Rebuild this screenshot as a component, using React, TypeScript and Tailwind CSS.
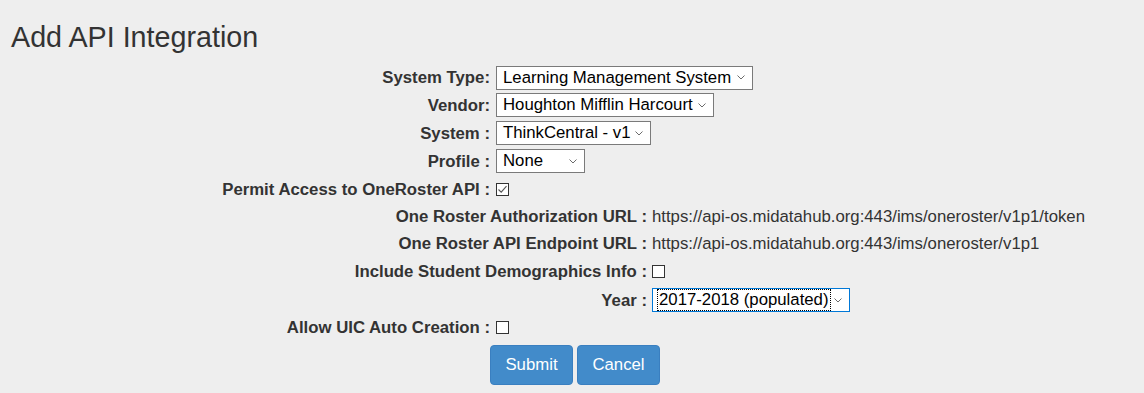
import React from 'react'

const font = { fontFamily: '"Liberation Sans", Arial, sans-serif' }

const Chevron = () => (
  <svg width="8" height="5" viewBox="0 0 8 5" className="shrink-0">
    <path d="M0.5 0.5 L4 4 L7.5 0.5" fill="none" stroke="#6b6b6b" strokeWidth="1" />
  </svg>
)

type SelectProps = { value: string; width: string; focused?: boolean }

const FakeSelect = ({ value, width, focused }: SelectProps) => (
  <div
    className={`flex h-[24px] items-center justify-between bg-white pl-[4px] pr-[7px] text-[16.75px] text-black ${width} ${
      focused ? 'border border-[#0078d7]' : 'border border-[#7a7a7a]'
    }`}
  >
    <span
      className={`whitespace-nowrap leading-[20px] ${
        focused ? 'border border-dotted border-black px-[1px]' : 'px-[2px]'
      }`}
    >
      {value}
    </span>
    <Chevron />
  </div>
)

const Checkbox = ({ checked }: { checked?: boolean }) => (
  <div className="flex h-[13px] w-[13px] items-center justify-center border border-[#333333] bg-white">
    {checked && (
      <svg width="11" height="11" viewBox="0 0 11 11">
        <path d="M1.5 5.5 L4.2 8.2 L9.5 2.2" fill="none" stroke="#555555" strokeWidth="1.1" />
      </svg>
    )}
  </div>
)

const Row = ({
  label,
  children,
  inner,
  height
}: {
  label: string
  children: React.ReactNode
  inner?: boolean
  height: string
}) => (
  <div className={`flex items-center ${height}`}>
    <div
      className={`shrink-0 whitespace-nowrap pt-[1px] text-right text-[16.75px] font-bold text-[#333333] ${
        inner ? 'w-[647px]' : 'w-[490px]'
      }`}
    >
      {label}
    </div>
    <div className={inner ? 'ml-[5px]' : 'ml-[6px]'}>{children}</div>
  </div>
)

export default function App() {
  return (
    <div className="h-[393px] w-[1144px] overflow-hidden bg-[#eeeeee]" style={font}>
      <h1 className="pl-[11px] pt-[22px] text-[28.7px] font-normal leading-[31px] text-[#333333]">
        Add API Integration
      </h1>
      <div className="mt-[11px] flex flex-col">
        <Row label="System Type:" height="h-[27px]">
          <FakeSelect value="Learning Management System" width="w-[257px]" />
        </Row>
        <Row label="Vendor:" height="h-[28px]">
          <FakeSelect value="Houghton Mifflin Harcourt" width="w-[218px]" />
        </Row>
        <Row label="System :" height="h-[28px]">
          <FakeSelect value="ThinkCentral - v1" width="w-[155px]" />
        </Row>
        <Row label="Profile :" height="h-[28px]">
          <FakeSelect value="None" width="w-[89px]" />
        </Row>
        <Row label="Permit Access to OneRoster API :" height="h-[28px]">
          <Checkbox checked />
        </Row>
        <Row label="One Roster Authorization URL :" inner height="h-[26px]">
          <span className="block whitespace-nowrap pt-[1px] text-[16.75px] text-[#333333]">
            https://api-os.midatahub.org:443/ims/oneroster/v1p1/token
          </span>
        </Row>
        <Row label="One Roster API Endpoint URL :" inner height="h-[28px]">
          <span className="block whitespace-nowrap pt-[1px] text-[16.75px] text-[#333333]">
            https://api-os.midatahub.org:443/ims/oneroster/v1p1
          </span>
        </Row>
        <Row label="Include Student Demographics Info :" inner height="h-[28px]">
          <Checkbox />
        </Row>
        <Row label="Year :" inner height="h-[30px]">
          <FakeSelect value="2017-2018 (populated)" width="w-[198px]" focused />
        </Row>
        <Row label="Allow UIC Auto Creation :" height="h-[24px]">
          <Checkbox />
        </Row>
        <div className="ml-[6px] mt-[6px] flex justify-center gap-[4px]">
          <button
            type="button"
            className="h-[40px] w-[83px] rounded-[4px] border border-[#3a7fc0] bg-[#428bca] text-[16.75px] text-white"
          >
            Submit
          </button>
          <button
            type="button"
            className="h-[40px] w-[83px] rounded-[4px] border border-[#3a7fc0] bg-[#428bca] text-[16.75px] text-white"
          >
            Cancel
          </button>
        </div>
      </div>
    </div>
  )
}
